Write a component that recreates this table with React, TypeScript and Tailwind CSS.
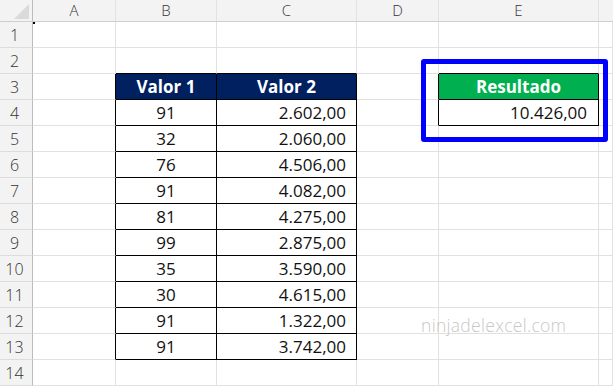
const cols = ["A", "B", "C", "D", "E", ""];
const colWidths = ["w-[83px]", "w-[101px]", "w-[140px]", "w-[82px]", "w-[160px]", "w-[14px]"];

const data: [string, string][] = [
  ["91", "2.602,00"],
  ["32", "2.060,00"],
  ["76", "4.506,00"],
  ["91", "4.082,00"],
  ["81", "4.275,00"],
  ["99", "2.875,00"],
  ["35", "3.590,00"],
  ["30", "4.615,00"],
  ["91", "1.322,00"],
  ["91", "3.742,00"],
];

type Cell = { text?: string; cls?: string };

function cellFor(row: number, col: number): Cell {
  // row: 1..14, col: 0..5 (A..F)
  const inTable = col >= 1 && col <= 2 && row >= 3 && row <= 13;
  const inResult = col === 4 && row >= 3 && row <= 4;
  const rightBlack = inTable || inResult || (col === 0 && row >= 3 && row <= 13) || (col === 3 && row >= 3 && row <= 4);
  const bottomBlack = inTable || inResult || (row === 2 && (col === 1 || col === 2)) || (row === 2 && col === 4);
  const border = `border-r border-b ${rightBlack ? "border-r-black" : "border-r-[#e1e1e1]"} ${bottomBlack ? "border-b-black" : "border-b-[#e1e1e1]"}`;

  if (row === 3 && col === 1) return { text: "Valor 1", cls: `${border} bg-[#002060] text-white font-bold justify-center` };
  if (row === 3 && col === 2) return { text: "Valor 2", cls: `${border} bg-[#002060] text-white font-bold justify-center` };
  if (row === 3 && col === 4) return { text: "Resultado", cls: `${border} bg-[#00b050] text-white font-bold justify-center` };
  if (row === 4 && col === 4) return { text: "10.426,00", cls: `${border} justify-end pr-[11px]` };
  if (row >= 4 && row <= 13 && col === 1) return { text: data[row - 4][0], cls: `${border} justify-center` };
  if (row >= 4 && row <= 13 && col === 2) return { text: data[row - 4][1], cls: `${border} justify-end pr-[10px]` };
  return { cls: border };
}

export default function App() {
  const rows = Array.from({ length: 14 }, (_, i) => i + 1);
  return (
    <div className="relative w-[613px] h-[388px] overflow-hidden bg-white font-['Open_Sans',sans-serif] text-[#111]">
      {/* column headers */}
      <div className="flex h-[22px] bg-[#f3f3f3] border-b border-[#cfcfcf]">
        <div className="relative w-[33px] shrink-0 border-r border-[#bcbcbc]">
          <div className="absolute right-[3px] bottom-[2px] w-0 h-0 border-l-[15px] border-l-transparent border-b-[15px] border-b-[#dadada]" />
        </div>
        {cols.map((c, i) => (
          <div
            key={i}
            className={`${colWidths[i]} shrink-0 flex items-center justify-center text-[15px] font-light text-[#333] ${i < 5 ? "border-r border-[#e2e2e2]" : ""}`}
          >
            {c}
          </div>
        ))}
      </div>

      {rows.map((r) => (
        <div key={r} className="flex h-[26px]">
          <div className="w-[33px] shrink-0 flex items-center justify-center pr-[3px] text-[16px] font-light text-[#333] bg-[#f3f3f3] border-r border-[#bcbcbc] border-b border-b-[#dcdcdc]">
            {r}
          </div>
          {cols.map((_, ci) => {
            const cell = cellFor(r, ci);
            return (
              <div
                key={ci}
                className={`${colWidths[ci]} shrink-0 flex items-center text-[17px] leading-none ${cell.cls ?? ""}`}
              >
                {cell.text}
              </div>
            );
          })}
        </div>
      ))}

      {/* active cell marker */}
      <div className="absolute left-[33px] top-[22px] w-[2px] h-[2px] bg-black" />

      {/* highlight box */}
      <div className="absolute left-[421px] top-[59px] w-[187px] h-[83px] border-[5px] border-[#0000ff] rounded-[3px]" />

      {/* watermark */}
      <div className="absolute left-[421px] top-[313px] text-[17.5px] leading-[24px] text-[#c8c8c8] font-light tracking-[0.3px]">
        ninjadelexcel.com
      </div>
    </div>
  );
}
